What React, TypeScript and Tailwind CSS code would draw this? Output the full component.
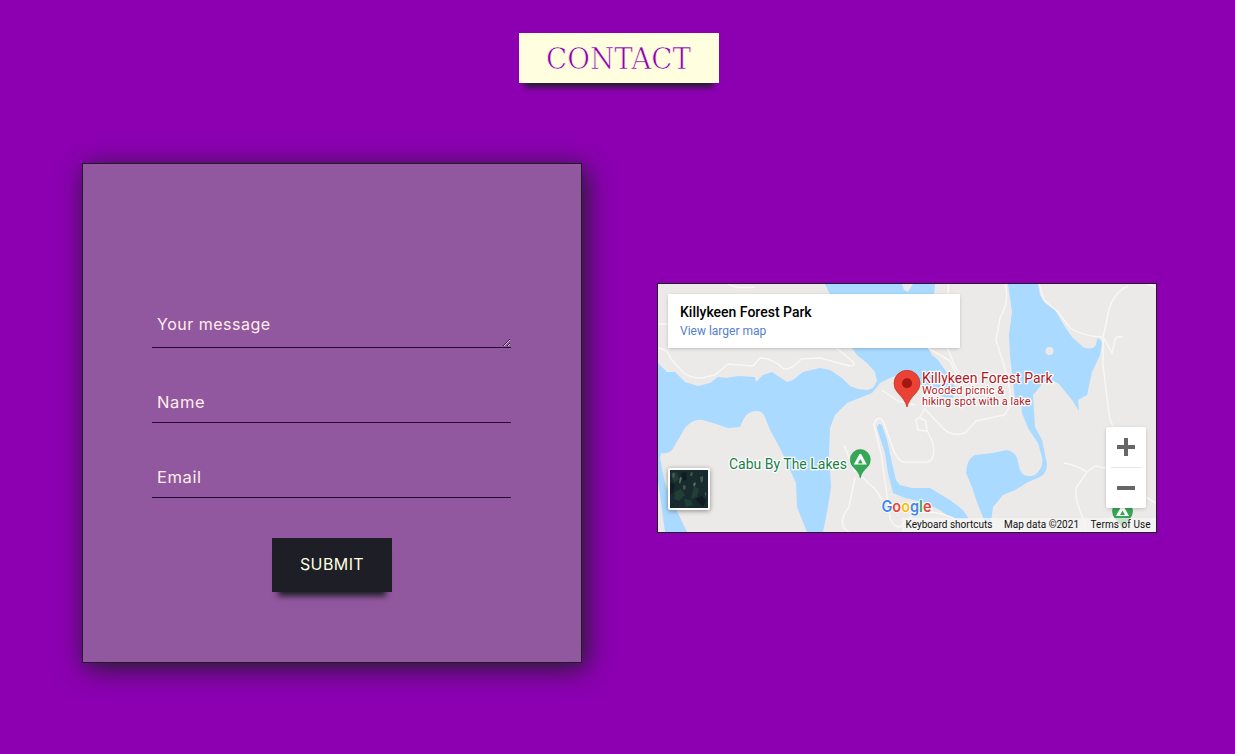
const WATER = [
  'M658 363L667 372L675 372L685 382L698 386L710 383L718 377L727 378L738 376L755 377L756 382L763 375L772 372L787 382L793 380L803 372L820 368L830 370L842 378L850 386L858 389L867 390L873 388L877 381L875 372L867 363L857 355L852 348L840 315L825 284H902L904 290L908 292L913 284H935L934 295L926 320L928 348L932 355L938 360L945 370L956 388L953 398L944 397L925 388L905 374L892 377L880 383L872 393L847 403L835 415L830 428L829 453L831 487L828 507L823 532H807L797 507L796 483L780 448L770 430L765 417Q762 410 755 411Q747 412 743 420L740 427L728 428L713 423L703 420Q693 418 685 428L672 450Q668 454 661 453L660 458L665 483L673 503L687 532H665L662 510L658 480Z',
  'M1008 284L1012 312L1009 335L1010 355L1013 382L1015 398L1021 402L1022 413L1028 428L1038 443L1042 457Q1044 468 1035 475Q1024 479 1020 470L1017 458Q1012 448 1002 451L993 453L975 455Q967 458 966 473L972 487L978 505L985 522H991L993 507L1003 495L1015 490L1028 482L1040 477Q1047 473 1047 464L1042 440L1035 427L1033 395L1043 383Q1052 378 1059 384L1072 400L1079 411L1078 400L1087 395L1092 372L1100 355L1102 343Q1100 338 1097 339L1096 345Q1092 351 1083 347L1072 337L1065 327L1055 310L1045 303L1040 295L1038 284Z',
  'M882 425Q878 422 877 428L885 453L888 473L893 493L905 498L923 502L940 510L952 519H969L963 510L950 500L930 488L912 488L900 485L896 480L892 463L887 440Z',
];

const ROADS = [
  'M658 348Q668 349 671 359L684 373Q694 380 706 377L715 375L728 364L753 366L760 358Q772 358 784 369Q792 370 801 359L820 358L850 366Q858 366 851 360L835 347',
  'M658 324H668',
  'M728 284Q735 289 755 287',
  'M948 284Q950 293 944 302V340L954 364L959 373',
  'M928 348L950 361L957 375',
  'M1005 284Q1010 300 1000 318L996 340L1004 365L1010 390Q1012 408 1004 415L976 421L965 433Q950 438 940 425L924 408',
  'M1039 284L1044 300L1058 312L1070 328Q1082 336 1103 337L1112 353L1115 340L1117 337H1123',
  'M1128 286Q1110 294 1107 320L1103 337V365L1107 398L1110 420L1121 440',
  'M1148 284L1156 287',
  'M882 390L898 401L915 405',
  'M924 410L920 417L916 420L918 430L927 431L926 421L920 418M926 428L933 443Q936 462 926 462H903Q896 460 890 440L883 421Q877 414 874 425L881 453L886 488L889 510Q890 527 900 527L914 514Q934 508 957 520',
  'M844 445L855 472M855 477L849 507Q839 520 844 528L849 532M861 476L876 490L884 503',
  'M1064 463Q1076 465 1087 472L1095 466L1110 469M1087 472L1076 488Q1075 502 1084 520L1086 532',
  'M1104 523L1144 496L1156 503',
];

const FOLIAGE = [
  { d: 'M675 492l6-3 4 6-6 6-5-2zM694 486l5 3-2 8-6 2zM684 499l7 1 2 5-7 2zM671 474l5-2 3 7-5 4z', c: '#223f36' },
  { d: 'M670 482l5 3-2 8-3 1zM695 499l7-3 4 5-3 6zM681 473l5-1 1 7-4 2z', c: '#0f1d22' },
  { d: 'M672 474l2-2 1 4-2 3zM683 485l3 1-1 4-2-1zM700 477l3-1v5l-2 2zM691 472l2 1-1 3-2 0z', c: '#425c4c' },
  { d: 'M680 477l2 1-2 6-1-2zM693 484l2-2 1 2-2 3zM705 492l1 1-1 5z', c: '#5c6f5b' },
];

function MapDrawing() {
  return (
    <svg className="block h-full w-full" viewBox="658 284 498 248" fontFamily="Roboto, sans-serif">
      <rect x="658" y="284" width="498" height="248" fill="#ebeae8" />
      {WATER.map((d) => (
        <path key={d} d={d} fill="#aadaff" />
      ))}
      <circle cx="1049.5" cy="351" r="4" fill="#ebeae8" />
      <g fill="none" stroke="#f8f7f5" strokeWidth="1.5" strokeLinejoin="round">
        {ROADS.map((d) => (
          <path key={d} d={d} />
        ))}
      </g>

      <g transform="translate(1122.500 511)">
        <CampPin />
      </g>
      <g transform="translate(860.3 459.5)">
        <CampPin />
      </g>

      <path d="M907 407C906 402 902 397 898.500 393.500Q894 389 894 383.300A13 13 0 0 1 920 383.300Q920 389 915.500 393.500C912 397 908 402 907 407Z" fill="#ea4335" stroke="#c5362b" strokeWidth=".8" />
      <circle cx="907" cy="383.300" r="5" fill="#a61611" />

      <g stroke="#fff" strokeWidth="2.500" strokeLinejoin="round" style={{ paintOrder: 'stroke' }}>
        <text x="922" y="383" fontSize="14" fill="#b3161b" textLength="130.500">Killykeen Forest Park</text>
        <text x="922" y="394" fontSize="11" fill="#b3161b" textLength="82">Wooded picnic &amp;</text>
        <text x="922" y="405" fontSize="11" fill="#b3161b" textLength="108.500">hiking spot with a lake</text>
        <text x="729" y="469" fontSize="14" fill="#188048" textLength="118">Cabu By The Lakes</text>
      </g>
      <rect x="902" y="518" width="254" height="14" fill="#f5f5f5" fillOpacity=".75" />
      <text x="881.500" y="511.500" fontFamily="Inter, sans-serif" fontSize="15.500" fontWeight="600" textLength="50" lengthAdjust="spacingAndGlyphs" stroke="#fff" strokeWidth="1.500" style={{ paintOrder: 'stroke' }}>
        <tspan fill="#4285f4">G</tspan><tspan fill="#ea4335">o</tspan><tspan fill="#fbbc05">o</tspan><tspan fill="#4285f4">g</tspan><tspan fill="#34a853">l</tspan><tspan fill="#ea4335">e</tspan>
      </text>
      <g fontSize="10" fill="#111">
        <text x="905.500" y="528" textLength="87">Keyboard shortcuts</text>
        <text x="1004" y="528" textLength="75">Map data ©2021</text>
        <text x="1090.500" y="528" textLength="60">Terms of Use</text>
      </g>
    </svg>
  );
}

function CampPin() {
  return (
    <>
      <path d="M0 18.500C-1 13.500-4 10.500-6.500 8Q-10 5-10 0A10 10 0 0 1 10 0Q10 5 6.500 8C4 10.500 1 13.500 0 18.500Z" fill="#34a853" stroke="#23914a" strokeWidth=".6" />
      <path d="M-.8-5.500H.8L6.500 5H-6.500Z" fill="#fff" />
      <path d="M0-.5L2.500 4H-2.500Z" fill="#34a853" />
    </>
  );
}

function LocationMap() {
  return (
    <div className="relative mt-[120px] h-[250px] w-[500px] border border-[#1e1f26]">
      <MapDrawing />
      <div className="absolute top-[10px] left-[10px] h-[54px] w-[292px] bg-white px-3 pt-[9px] font-[Roboto,sans-serif] shadow-[0_1px_4px_-1px_rgba(0,0,0,0.3)]">
        <div className="text-[14px] leading-[19px] font-medium text-black">Killykeen Forest Park</div>
        <a className="block text-[12px] leading-[19px] text-[#5580cc]" href="#map">View larger map</a>
      </div>
      <div className="absolute top-[184px] left-[10px] h-[42px] w-[42px] overflow-hidden rounded-[2px] border-2 border-white bg-[#182b2e] shadow-[0_1px_5px_rgba(0,0,0,0.4)]">
        <svg className="block h-full w-full" viewBox="670 470 38 38">
          {FOLIAGE.map((leaf) => (
            <path key={leaf.c} d={leaf.d} fill={leaf.c} />
          ))}
        </svg>
      </div>
      <div className="absolute top-[143px] left-[448px] flex h-[81px] w-10 flex-col items-center rounded-[2px] bg-white shadow-[0_1px_4px_-1px_rgba(0,0,0,0.3)]">
        <svg className="h-10 w-10" viewBox="0 0 40 40" aria-hidden="true">
          <path d="M18 11h4v7h7v4h-7v7h-4v-7h-7v-4h7z" fill="#666" />
        </svg>
        <div className="h-px w-[30px] bg-[#e6e6e6]" />
        <svg className="h-10 w-10" viewBox="0 0 40 40" aria-hidden="true">
          <path d="M11 18h18v4H11z" fill="#666" />
        </svg>
      </div>
    </div>
  );
}

function ContactForm() {
  return (
    <form className="flex h-[500px] w-[500px] flex-col border border-[#1e1f26] bg-[#92589f] pt-[144px] pl-[69px] font-[Inter,sans-serif] text-base shadow-[4px_5px_25px_#1e1f26]">
      <textarea
        className="block h-10 w-[359px] overflow-hidden border-b border-[#240a30] bg-transparent px-[5px] pt-1 leading-[24px] tracking-[0.5px] outline-none placeholder:text-[#ffeeeb] placeholder:opacity-100"
        placeholder="Your message"
      />
      <input
        className="mt-[35px] h-10 w-[359px] border-b border-[#240a30] bg-transparent px-[5px] pb-0.5 text-[16.500px] tracking-[0.6px] outline-none placeholder:text-[#ffeeeb] placeholder:opacity-100"
        placeholder="Name"
      />
      <input
        className="mt-[35px] h-10 w-[359px] border-b border-[#240a30] bg-transparent px-[5px] pb-0.5 text-[16.500px] tracking-[0.6px] outline-none placeholder:text-[#ffeeeb] placeholder:opacity-100"
        placeholder="Email"
      />
      <button type="button" className="mt-10 ml-[120px] h-[54px] w-[120px] bg-[#1e1f26] pb-0.5 tracking-[0.4px] text-[#ffffe0] shadow-[0_10px_6px_-6px_#1e1f26]">
        SUBMIT
      </button>
    </form>
  );
}

export default function App() {
  return (
    <main className="h-[754px] overflow-hidden bg-[#8c00b2] pt-[33px]">
      <h1 className="ml-[519px] flex h-[50px] w-[200px] items-center justify-center bg-[#ffffe0] shadow-[0_10px_6px_-6px_#1e1f26]">
        <svg className="block h-[50px] w-[200px]" viewBox="0 0 200 50" role="img">
          <text x="27" y="36" fontFamily="'DejaVu Serif', serif" fontSize="30" fill="#8c00b2" stroke="#ffffe0" strokeWidth=".7" textLength="145" lengthAdjust="spacingAndGlyphs">
            CONTACT
          </text>
        </svg>
      </h1>
      <div className="mt-20 flex items-start gap-[75px] pl-[82px]">
        <ContactForm />
        <LocationMap />
      </div>
    </main>
  );
}
